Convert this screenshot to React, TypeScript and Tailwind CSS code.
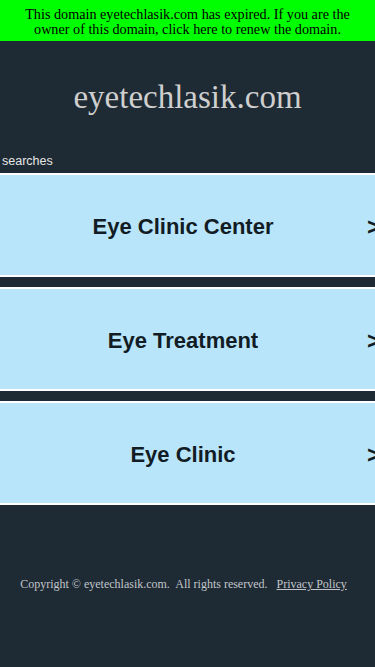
import { ReactNode } from "react";

const SEARCHES = ["Eye Clinic Center", "Eye Treatment", "Eye Clinic"];

function SearchItem({ children }: { children: ReactNode }) {
  return (
    <a className="relative flex h-[104px] items-center justify-center border-y-2 border-white bg-[#b9e5fb] pr-[9px] pt-[2px] text-[22px] font-bold text-[#111c24] [font-family:'Liberation_Sans',Arial,sans-serif]">
      <span>{children}</span>
      <span className="absolute right-[-6px] top-1/2 -translate-y-[40%] text-[24px] font-bold leading-none">
        &gt;
      </span>
    </a>
  );
}

export default function App() {
  return (
    <div className="flex min-h-[667px] w-full flex-col overflow-hidden bg-[#1e2a34]">
      {/* expired banner */}
      <div className="flex h-[41px] items-center justify-center bg-[#00ff00] px-4 pt-[2px] text-center text-[14.2px] leading-[14.5px] text-black [font-family:'Liberation_Serif','Times_New_Roman',serif]">
        This domain eyetechlasik.com has expired. If you are the owner of this domain, click here to renew the domain.
      </div>

      {/* domain title */}
      <div className="flex h-[113px] items-center justify-center text-[33px] text-[#cfcfcf] [font-family:'Liberation_Serif','Times_New_Roman',serif]">
        eyetechlasik.com
      </div>

      <div className="pl-[2px] text-[12.5px] leading-[14px] text-[#e6e6e6] [font-family:'Liberation_Sans',Arial,sans-serif]">
        searches
      </div>

      <div className="mt-[5px] flex flex-col gap-[10px]">
        {SEARCHES.map((s) => (
          <SearchItem key={s}>{s}</SearchItem>
        ))}
      </div>

      {/* footer */}
      <div className="mt-[70px] flex justify-center gap-[9px] pr-[8px] text-[12px] text-[#c2c6ca] [font-family:'Liberation_Serif','Times_New_Roman',serif]">
        <span>Copyright © eyetechlasik.com.&nbsp; All rights reserved.</span>
        <a className="underline">Privacy Policy</a>
      </div>
    </div>
  );
}
